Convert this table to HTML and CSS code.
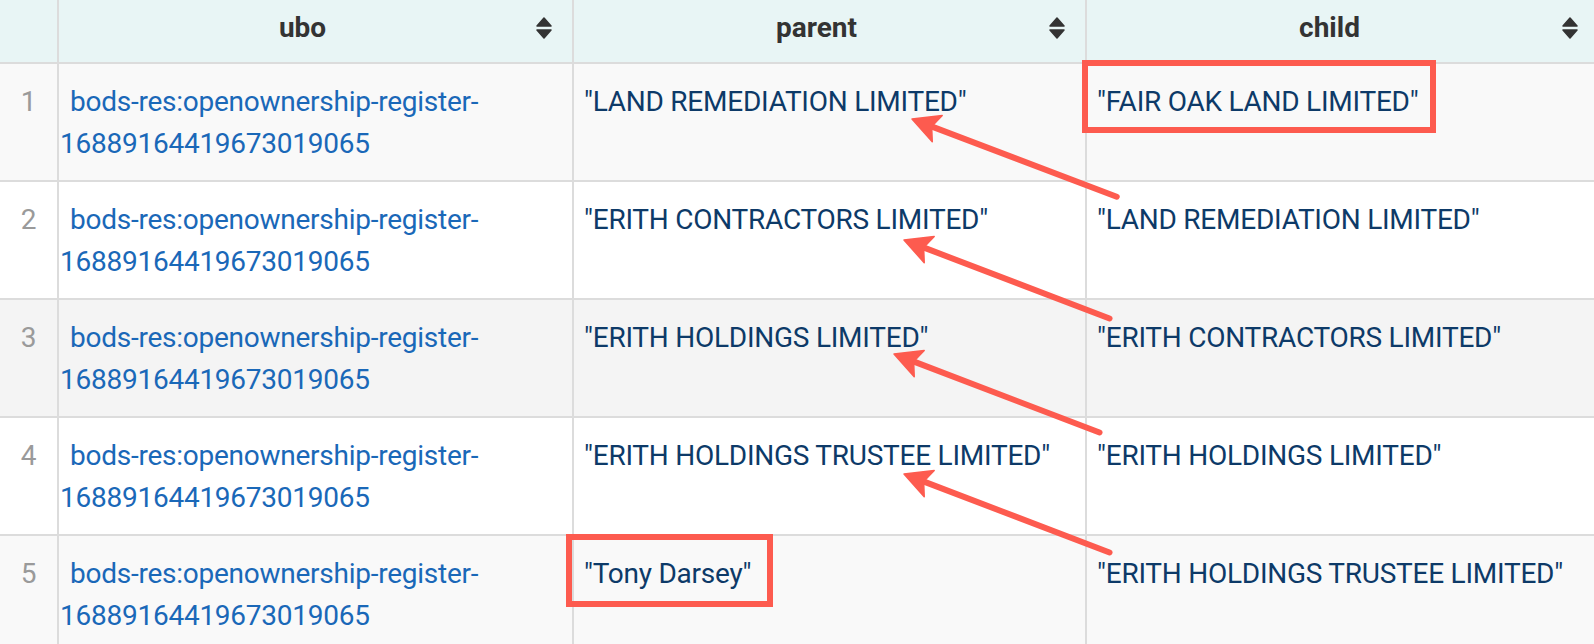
FILE: index.html
```html
<!DOCTYPE html>
<html>
<head>
<meta charset="utf-8">
<title>Ownership chain</title>
<link rel="stylesheet" href="styles.css">
</head>
<body>
<div class="page">
  <div class="table">
    <div class="row head">
      <div class="cell idx"></div>
      <div class="cell th"><span class="label">ubo</span><svg class="sort" viewBox="0 0 16 22" width="16" height="22"><path d="M8 1 L15 9 L1 9 Z M1 13 L15 13 L8 21 Z"/></svg></div>
      <div class="cell th"><span class="label">parent</span><svg class="sort" viewBox="0 0 16 22" width="16" height="22"><path d="M8 1 L15 9 L1 9 Z M1 13 L15 13 L8 21 Z"/></svg></div>
      <div class="cell th last"><span class="label">child</span><svg class="sort" viewBox="0 0 16 22" width="16" height="22"><path d="M8 1 L15 9 L1 9 Z M1 13 L15 13 L8 21 Z"/></svg></div>
    </div>

    <div class="row r-light">
      <div class="cell idx">1</div>
      <div class="cell ubo"><a class="link">bods-res:openownership-register-<wbr>16889164419673019065</a></div>
      <div class="cell val">"LAND REMEDIATION LIMITED"</div>
      <div class="cell val last">"FAIR OAK LAND LIMITED"</div>
    </div>
    <div class="row r-white">
      <div class="cell idx">2</div>
      <div class="cell ubo"><a class="link">bods-res:openownership-register-<wbr>16889164419673019065</a></div>
      <div class="cell val">"ERITH CONTRACTORS LIMITED"</div>
      <div class="cell val last">"LAND REMEDIATION LIMITED"</div>
    </div>
    <div class="row r-grey">
      <div class="cell idx">3</div>
      <div class="cell ubo"><a class="link">bods-res:openownership-register-<wbr>16889164419673019065</a></div>
      <div class="cell val">"ERITH HOLDINGS LIMITED"</div>
      <div class="cell val last">"ERITH CONTRACTORS LIMITED"</div>
    </div>
    <div class="row r-white">
      <div class="cell idx">4</div>
      <div class="cell ubo"><a class="link">bods-res:openownership-register-<wbr>16889164419673019065</a></div>
      <div class="cell val">"ERITH HOLDINGS TRUSTEE LIMITED"</div>
      <div class="cell val last">"ERITH HOLDINGS LIMITED"</div>
    </div>
    <div class="row r-light">
      <div class="cell idx">5</div>
      <div class="cell ubo"><a class="link">bods-res:openownership-register-<wbr>16889164419673019065</a></div>
      <div class="cell val">"Tony Darsey"</div>
      <div class="cell val last">"ERITH HOLDINGS TRUSTEE LIMITED"</div>
    </div>
  </div>

  <svg class="annot" width="1594" height="644" viewBox="0 0 1594 644">
    <g class="mark">
      <rect x="1085" y="63" width="348" height="67"/>
      <rect x="569" y="537" width="201" height="67"/>
    </g>
    <g class="arrow" transform="translate(912 119) rotate(20.8)">
      <line x1="20" y1="0" x2="219" y2="0"/>
      <polygon points="0,0 27,-14 21,0 27,14"/>
    </g>
    <g class="arrow" transform="translate(904 240) rotate(20.9)">
      <line x1="20" y1="0" x2="220" y2="0"/>
      <polygon points="0,0 27,-14 21,0 27,14"/>
    </g>
    <g class="arrow" transform="translate(894 354) rotate(20.9)">
      <line x1="20" y1="0" x2="220" y2="0"/>
      <polygon points="0,0 27,-14 21,0 27,14"/>
    </g>
    <g class="arrow" transform="translate(904 474) rotate(20.9)">
      <line x1="20" y1="0" x2="220" y2="0"/>
      <polygon points="0,0 27,-14 21,0 27,14"/>
    </g>
  </svg>
</div>
</body>
</html>
```

FILE: styles.css
```css
* { box-sizing: border-box; }

html, body {
  margin: 0;
  padding: 0;
  background: #ffffff;
}

body {
  font-family: Roboto, "Liberation Sans", Arial, sans-serif;
  font-size: 28px;
  width: 1594px;
  height: 644px;
  overflow: hidden;
}

.page {
  position: relative;
  width: 1594px;
  height: 644px;
  overflow: hidden;
}

.table {
  display: flex;
  flex-direction: column;
}

.row {
  display: grid;
  grid-template-columns: 59px 515px 513px 1fr;
  border-bottom: 2px solid #dcdcdc;
}

.row.head {
  background: #e8f5f5;
  height: 64px;
}

.r-light { background: #f9f9f9; }
.r-white { background: #ffffff; }
.r-grey  { background: #f4f4f4; }

.cell {
  border-right: 2px solid #dcdcdc;
  min-width: 0;
}

.cell.last { border-right: none; }

.head .cell {
  height: 62px;
}

.th {
  display: flex;
  align-items: flex-start;
  padding: 8px 20px 0 10px;
}

.th.last { padding-right: 16px; }

.label {
  flex: 1;
  text-align: center;
  font-weight: 700;
  line-height: 40px;
  color: #333333;
}

.sort {
  flex: none;
  margin-top: 9px;
  fill: #333333;
  stroke: #333333;
  stroke-width: 1.5;
  stroke-linejoin: round;
}

.row:not(.head) .cell {
  height: 116px;
  padding-top: 17px;
  line-height: 42px;
  letter-spacing: -0.25px;
}

.idx {
  text-align: center;
  color: #9a9a9a;
}

.ubo {
  padding-left: 1px;
  text-indent: 10px;
}

.link {
  color: #1a68b8;
  text-decoration: none;
}

.val {
  padding-left: 10px;
  color: #0d3a68;
}

.annot {
  position: absolute;
  left: 0;
  top: 0;
  pointer-events: none;
}

.mark rect {
  fill: none;
  stroke: #fd5b4f;
  stroke-width: 6;
}

.arrow line {
  stroke: #fd5b4f;
  stroke-width: 6;
  stroke-linecap: round;
}

.arrow polygon {
  fill: #fd5b4f;
  stroke: #fd5b4f;
  stroke-width: 1.5;
  stroke-linejoin: round;
}
```
